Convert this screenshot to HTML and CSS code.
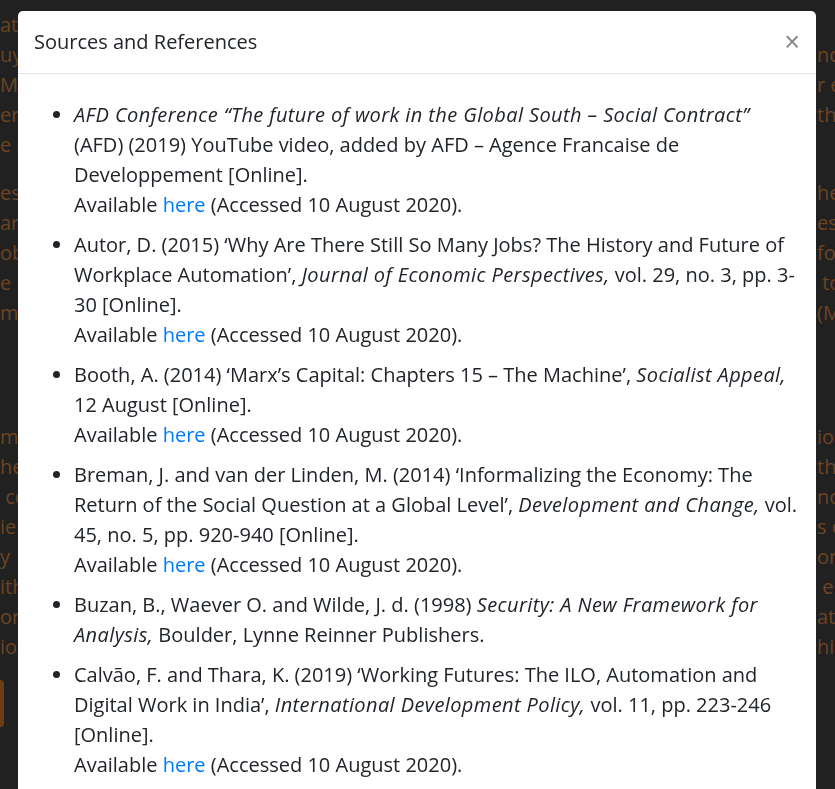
FILE: index.html
```html
<!DOCTYPE html>
<html lang="en">
<head>
<meta charset="utf-8">
<title>Sources and References</title>
<link rel="stylesheet" href="styles.css">
</head>
<body>
<div class="page">
  <div class="bg-block first">
    <div class="bg-line"><span class="l">ati</span><span class="r"></span></div>
    <div class="bg-line"><span class="l">uy</span><span class="r">nc</span></div>
    <div class="bg-line"><span class="l">M</span><span class="r">r e</span></div>
    <div class="bg-line"><span class="l">ere</span><span class="r">tho</span></div>
    <div class="bg-line"><span class="l">e c</span><span class="r"></span></div>
  </div>
  <div class="bg-block">
    <div class="bg-line"><span class="l">es</span><span class="r">her</span></div>
    <div class="bg-line"><span class="l">ar</span><span class="r">ess</span></div>
    <div class="bg-line"><span class="l">ob</span><span class="r">for</span></div>
    <div class="bg-line"><span class="l">e</span><span class="r">&nbsp;to</span></div>
    <div class="bg-line"><span class="l">mo</span><span class="r">(M</span></div>
  </div>
  <div class="bg-block third">
    <div class="bg-line"><span class="l">mo</span><span class="r">ion</span></div>
    <div class="bg-line"><span class="l">he</span><span class="r">tho</span></div>
    <div class="bg-line"><span class="l">&nbsp;co</span><span class="r">no</span></div>
    <div class="bg-line"><span class="l">ie</span><span class="r">s c</span></div>
    <div class="bg-line"><span class="l">y</span><span class="r">on</span></div>
    <div class="bg-line"><span class="l">ith</span><span class="r">&nbsp;e</span></div>
    <div class="bg-line"><span class="l">or</span><span class="r">at</span></div>
    <div class="bg-line"><span class="l">ior</span><span class="r">hin</span></div>
  </div>
  <div class="bg-button"></div>
</div>

<div class="modal">
  <div class="modal-header">
    <h5 class="modal-title">Sources and References</h5>
    <button class="close" type="button" aria-label="Close">×</button>
  </div>
  <div class="modal-body">
    <ul class="refs">
      <li><em>AFD Conference “The future of work in the Global South – Social Contract”</em> (AFD) (2019) YouTube video, added by AFD – Agence Francaise de Developpement [Online].<br>Available <a href="#">here</a> (Accessed 10 August 2020).</li>
      <li>Autor, D. (2015) ‘Why Are There Still So Many Jobs? The History and Future of Workplace Automation’, <em>Journal of Economic Perspectives,</em> vol. 29, no. 3, pp. 3-30 [Online].<br>Available <a href="#">here</a> (Accessed 10 August 2020).</li>
      <li>Booth, A. (2014) ‘Marx’s Capital: Chapters 15 – The Machine’, <em>Socialist Appeal,</em> 12 August [Online].<br>Available <a href="#">here</a> (Accessed 10 August 2020).</li>
      <li>Breman, J. and van der Linden, M. (2014) ‘Informalizing the Economy: The Return of the Social Question at a Global Level’, <em>Development and Change,</em> vol. 45, no. 5, pp. 920-940 [Online].<br>Available <a href="#">here</a> (Accessed 10 August 2020).</li>
      <li>Buzan, B., Waever O. and Wilde, J. d. (1998) <em>Security: A New Framework for Analysis,</em> Boulder, Lynne Reinner Publishers.</li>
      <li>Calvão, F. and Thara, K. (2019) ‘Working Futures: The ILO, Automation and Digital Work in India’, <em>International Development Policy,</em> vol. 11, pp. 223-246 [Online].<br>Available <a href="#">here</a> (Accessed 10 August 2020).</li>
    </ul>
  </div>
</div>
</body>
</html>
```

FILE: styles.css
```css
html, body {
  margin: 0;
  padding: 0;
  height: 100%;
  overflow: hidden;
}

body {
  background: #212121;
  font-family: "Open Sans", "Noto Sans", sans-serif;
  color: #212529;
}

.page {
  color: #6c4422;
  font-size: 20px;
  line-height: 30px;
}

.bg-block {
  margin-bottom: 18px;
}

.bg-block.first {
  padding-top: 10px;
}

.bg-block.third {
  margin-top: 94px;
}

.bg-line {
  display: flex;
  justify-content: space-between;
  height: 30px;
}

.bg-line .l {
  white-space: nowrap;
}

.bg-line .r {
  width: 18px;
  white-space: nowrap;
}

.bg-button {
  margin-top: 7px;
  margin-left: -40px;
  width: 44px;
  height: 47px;
  border-radius: 4px;
  background: #6b3f16;
}

.modal {
  position: fixed;
  top: 11px;
  left: 18px;
  width: 798px;
  bottom: -20px;
  background: #fff;
  border-radius: 5px;
  overflow: hidden;
}

.modal-header {
  display: flex;
  align-items: center;
  justify-content: space-between;
  padding: 16px 16px;
  border-bottom: 1px solid #dee2e6;
}

.modal-title {
  margin: 0;
  font-size: 20px;
  font-weight: 400;
  line-height: 30px;
  color: #212529;
}

.close {
  border: 0;
  background: transparent;
  padding: 0;
  margin-right: 0;
  font-family: "Liberation Sans", sans-serif;
  font-size: 27px;
  line-height: 30px;
  color: #888;
  cursor: pointer;
}

.modal-body {
  padding: 16px;
}

.refs {
  margin: 0;
  padding: 0 0 0 40px;
  font-size: 20px;
  line-height: 30px;
  letter-spacing: 0;
}

.refs em {
  letter-spacing: 0.4px;
}

.refs li {
  margin: 10px 0 10px;
}

.refs a {
  color: #007bff;
  text-decoration: none;
}
```
